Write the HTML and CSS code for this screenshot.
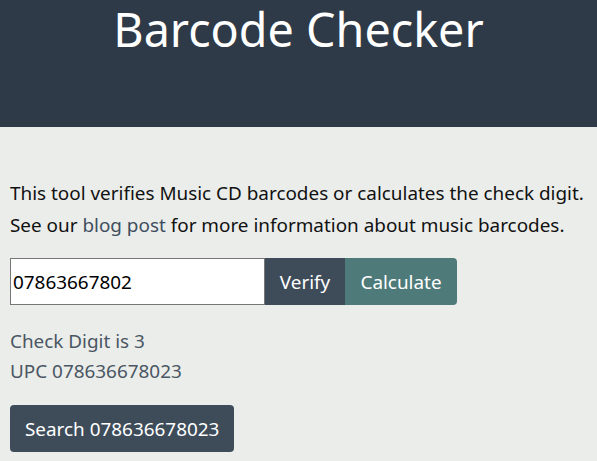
FILE: index.html
```html
<!DOCTYPE html>
<html lang="en">
<head>
<meta charset="utf-8">
<title>Barcode Checker</title>
<link rel="stylesheet" href="styles.css">
</head>
<body>
<header class="hero">
  <h1 class="title">Barcode Checker</h1>
</header>
<main class="content">
  <p class="intro">This tool verifies Music CD barcodes or calculates the check digit.<br>See our <a class="link" href="#">blog post</a> for more information about music barcodes.</p>
  <form class="form">
    <input class="field" type="text" value="07863667802">
    <button class="btn btn-verify" type="button">Verify</button>
    <button class="btn btn-calc" type="button">Calculate</button>
  </form>
  <div class="result">
    <div>Check Digit is 3</div>
    <div>UPC 078636678023</div>
  </div>
  <button class="btn btn-search" type="button">Search 078636678023</button>
</main>
</body>
</html>
```
FILE: styles.css
```css
html, body {
  margin: 0;
  padding: 0;
}
body {
  background: #ebedea;
  font-family: "Noto Sans", sans-serif;
  font-size: 18.9px;
  color: #111;
}
.hero {
  background: #2e3a47;
  height: 127px;
  display: flex;
  justify-content: center;
}
.title {
  margin: 0;
  color: #fff;
  font-weight: 400;
  font-size: 46.7px;
  line-height: 58px;
}
.content {
  padding: 50px 10px 0;
}
.intro {
  margin: 0;
  line-height: 32px;
}
.link {
  color: #3e4e5e;
  text-decoration: none;
}
.form {
  display: flex;
  margin-top: 17px;
  height: 47px;
}
.field {
  box-sizing: border-box;
  width: 255px;
  height: 47px;
  border: 1px solid #777;
  padding: 0 2px;
  font-family: inherit;
  font-size: 18.9px;
  color: #000;
  background: #fff;
  margin: 0;
}
.btn {
  border: 0;
  margin: 0;
  font-family: inherit;
  font-size: 18.9px;
  color: #fff;
  cursor: pointer;
}
.btn-verify {
  background: #3e4c5a;
  width: 80px;
}
.btn-calc {
  background: #4e7a79;
  width: 112px;
  border-radius: 0 4px 4px 0;
}
.result {
  margin-top: 21px;
  color: #4a5663;
  line-height: 30px;
}
.btn-search {
  background: #3e4c5a;
  margin-top: 19px;
  height: 47px;
  padding: 0 15px;
  border-radius: 4px;
}
```
